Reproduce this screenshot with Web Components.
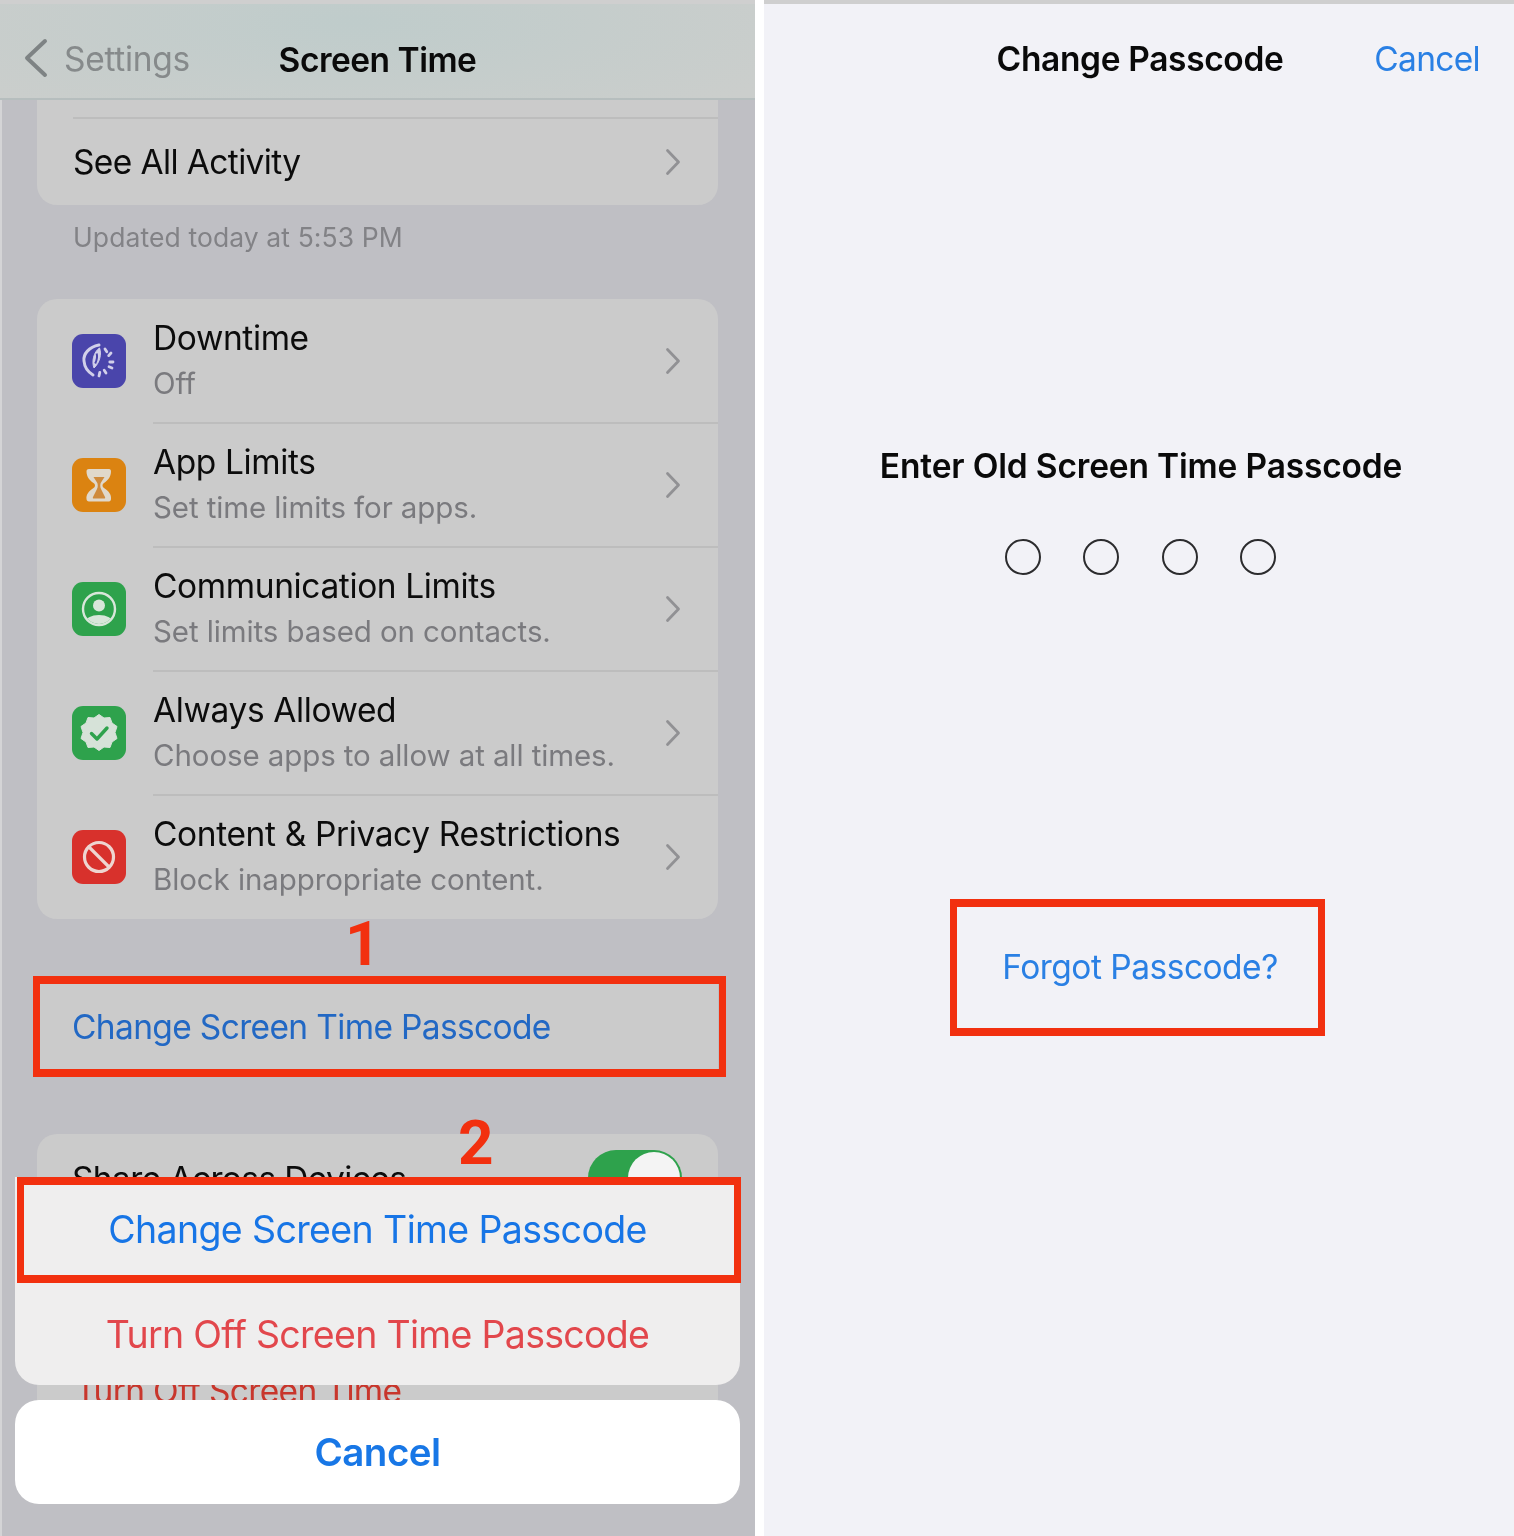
<!DOCTYPE html>
<html lang="en">
<head>
<meta charset="utf-8">
<title>Change Screen Time Passcode</title>
<style>
  html, body { margin: 0; background: #cfcfcf; }
  body { font-family: Inter, "Liberation Sans", sans-serif; }
  guide-page { filter: blur(0.75px); }
</style>
</head>
<body>
<guide-page>
  <screen-time slot="left"></screen-time>
  <change-passcode slot="right"></change-passcode>
</guide-page>

<script>
const RED = '#f2300f';

class GuidePage extends HTMLElement {
    constructor() {
        super();
        this.attachShadow({ mode: 'open' }).innerHTML = `
<style>
  :host { display: grid; grid-template-columns: 755px 750px; column-gap: 9px; width: 1514px; height: 1536px; overflow: hidden; background: #fff; }
</style>
<slot name="left"></slot>
<slot name="right"></slot>`;
    }
}

// red marker frame laid over whatever it is dropped in
class MarkBox extends HTMLElement {
    constructor() {
        super();
        this.attachShadow({ mode: 'open' }).innerHTML = `
<style>
  :host { display: block; position: absolute; box-sizing: border-box; border: 8px solid ${RED}; border-left-width: 7px; border-right-width: 7px; pointer-events: none; z-index: 5; }
</style>`;
    }
}

class StepNumber extends HTMLElement {
    constructor() {
        super();
        this.attachShadow({ mode: 'open' }).innerHTML = `
<style>
  :host { display: block; position: absolute; font: 700 62px/62px Roboto, "Liberation Sans", sans-serif; color: ${RED}; z-index: 5; }
</style>
<slot></slot>`;
    }
}

class StCard extends HTMLElement {
    constructor() {
        super();
        this.attachShadow({ mode: 'open' }).innerHTML = `
<style>
  :host { display: block; position: relative; margin: 0 37px; background: #cbcbcb; border-radius: 20px; }
</style>
<slot></slot>`;
    }
}

const ICONS = {
    downtime: { bg: '#4a45ab', svg: `
      <path d="M27 11C17 13 11 20 12 27C12.500 33 16 38 21 41" fill="none" stroke="#d2d0ea" stroke-width="3" stroke-linecap="round"/>
      <path d="M27.500 14c2.500 6 0 15 -5.500 20c-2.500 -6 -.5 -16 5.500 -20z" fill="#d2d0ea" stroke="#d2d0ea" stroke-width="1" stroke-linejoin="round"/>
      <path d="M24.700 19.500c1 4 0 7 -1.500 10" fill="none" stroke="#4a45ab" stroke-width="2"/>
      <g stroke="#d2d0ea" stroke-width="2.800" stroke-linecap="round">
        <path d="M33 15l1.800 2.800M39 19l-2.300 2.600M41 28h-3.200M40 34l-3 -1.200M34 39l-1.800 -2.800M27 42l.8 -3.600"/>
      </g>` },
    hourglass: { bg: '#db8311', svg: `
      <path d="M17 11h20c1.500 0 2 1 2 2.500c0 5 -3 9 -7 11.500c-2 1.200 -2 3.800 0 5c5 3 7.500 7 7 11c0 1.500 -1 2.500 -2 2.500h-20c-1.500 0 -2.500 -1 -2.500 -2.500c-.5 -4 2 -8 7 -11c2 -1.200 2 -3.800 0 -5c-4 -2.500 -7 -6.500 -7 -11.500c0 -1.500 .5 -2.500 2.500 -2.500z" fill="#e0d8cb"/>
      <path d="M21.500 19h11l-3.500 5.500c-1 1.200 -1 5 0 6.500l4 8c.5 1 0 1.500 -1 1.500h-10c-1 0 -1.500 -.5 -1 -1.500l4 -8c1 -1.500 1 -5.300 0 -6.500z" fill="#cf8a3c"/>` },
    person: { bg: '#2ea24c', svg: `
      <clipPath id="p"><circle cx="27" cy="27" r="15"/></clipPath>
      <circle cx="27" cy="23.500" r="6" fill="#d8e6da"/>
      <ellipse cx="27" cy="41" rx="14" ry="8" fill="#d8e6da" clip-path="url(#p)"/>
      <circle cx="27" cy="27" r="16" fill="none" stroke="#d8e6da" stroke-width="2.400"/>` },
    allowed: { bg: '#2ea24c', svg: `
      <path d="M27 8.500l5 3.500l6 -.5l2 5.500l5 3.500l-2 6l2 6l-5 3.500l-2 5.500l-6 -.5l-5 3.500l-5 -3.500l-6 .5l-2 -5.500l-5 -3.500l2 -6l-2 -6l5 -3.500l2 -5.500l6 .5z" fill="#d6e2d8" stroke="#d6e2d8" stroke-width="1" stroke-linejoin="round"/>
      <path d="M19.500 27.500l5.500 5.500l10 -11" fill="none" stroke="#2ea24c" stroke-width="3.400" stroke-linecap="round" stroke-linejoin="round"/>` },
    block: { bg: '#d8312c', svg: `
      <circle cx="27" cy="27" r="14.500" fill="none" stroke="#eed5d0" stroke-width="3.200"/>
      <path d="M17 17l20 20" stroke="#eed5d0" stroke-width="3.200"/>` }
};

class AppIcon extends HTMLElement {
    constructor() {
        super();
        const icon = ICONS[this.getAttribute('kind')];
        this.attachShadow({ mode: 'open' }).innerHTML = `
<style>
  :host { display: block; width: 54px; height: 54px; border-radius: 11px; background: ${icon.bg}; }
  svg { display: block; }
</style>
<svg width="54" height="54" viewBox="0 0 54 54">${icon.svg}</svg>`;
    }
}

class StChevron extends HTMLElement {
    constructor() {
        super();
        this.attachShadow({ mode: 'open' }).innerHTML = `
<style>
  :host { display: block; width: 16px; height: 28px; }
  svg { display: block; }
</style>
<svg width="16" height="28" viewBox="0 0 16 28"><path d="M2.500 2.500L13.500 14L2.500 25.500" fill="none" stroke="#919194" stroke-width="2.800" stroke-linecap="round" stroke-linejoin="round"/></svg>`;
    }
}

class StRow extends HTMLElement {
    constructor() {
        super();
        this.attachShadow({ mode: 'open' }).innerHTML = `
<style>
  :host { display: grid; grid-template-columns: 54px 1fr 16px; column-gap: 27px; align-items: center; height: 124px; padding: 0 37px 0 35px; box-sizing: border-box; position: relative; }
  :host(:not(:last-child))::after { content: ""; position: absolute; left: 116px; right: 0; bottom: -1px; height: 2px; background: #bdbdbd; }
  .text { display: flex; flex-direction: column; margin-top: -1px; }
  .title { font-size: 33.500px; line-height: 46px; letter-spacing: -0.38px; color: #0c0c0c; white-space: nowrap; }
  .sub { font-size: 29.500px; line-height: 45px; letter-spacing: -0.1px; color: #7a7a7e; white-space: nowrap; }
</style>
<slot name="icon"></slot>
<div class="text">
  <div class="title"><slot name="title"></slot></div>
  <div class="sub"><slot name="sub"></slot></div>
</div>
<st-chevron></st-chevron>`;
    }
}

class ScreenTime extends HTMLElement {
    constructor() {
        super();
        this.attachShadow({ mode: 'open' }).innerHTML = `
<style>
  :host { display: block; position: relative; height: 1536px; overflow: hidden; background: #bfbfc4; box-shadow: inset 2px 0 0 #d4d4d6; }
  .strip { height: 4px; background: #cfcfcf; }
  nav {
    height: 96px; box-sizing: border-box; position: relative; display: flex; align-items: center; justify-content: center; padding-top: 17px;
    background: radial-gradient(ellipse 480px 120px at 47% 20%, #bfcccb, #cbcecc 100%);
    border-bottom: 2px solid #b6bebe;
  }
  .back { position: absolute; left: 23px; top: 26px; display: flex; align-items: center; gap: 15px; color: #868a8b; font-size: 33.500px; letter-spacing: -0.3px; line-height: 58px; height: 58px; }
  .back svg { display: block; margin-top: -2px; }
  .head { font-size: 33.500px; font-weight: 600; letter-spacing: -0.5px; color: #0a0a0a; line-height: 46px; }
  .sliver { height: 17px; border-bottom: 2px solid #bdbdbd; margin-left: 36px; }
  .see-row { height: 86px; display: flex; align-items: center; justify-content: space-between; padding: 0 37px 0 36px; }
  .line { font-size: 33.500px; letter-spacing: -0.62px; color: #0c0c0c; }
  .note { font-size: 26.500px; line-height: 36px; letter-spacing: 0.1px; color: #828286; margin: 14px 0 44px 73px; }
  .pass { height: 96px; margin-top: 60px; display: flex; align-items: center; padding-left: 35px; color: #2268c4; font-size: 33.500px; letter-spacing: -0.65px; }
  .share { margin-top: 59px; height: 306px; }
  .share-row { height: 88px; display: flex; align-items: center; justify-content: space-between; padding: 0 36px 0 35px; }
  .share-row .line { margin-top: 2px; }
  .toggle { width: 94px; height: 56px; border-radius: 28px; background: #2ea24c; position: relative; }
  .toggle::after { content: ""; position: absolute; right: 2px; top: 2px; width: 52px; height: 52px; border-radius: 50%; background: #f4f4f4; }
  .off { position: absolute; left: 38px; top: 234px; line-height: 46px; font-size: 33.500px; letter-spacing: -0.65px; color: #c8362c; }
  .one { left: 345px; top: 913px; }
  .two { left: 458px; top: 1112px; }
  .frame-a { left: -4px; right: -8px; top: -3px; bottom: -2px; }
  .sheet { position: absolute; left: 15px; width: 725px; top: 1177px; z-index: 3; }
  .group { background: #efeeee; border-radius: 0 0 24px 24px; }
  .act { display: flex; align-items: center; justify-content: center; font-size: 37.500px; position: relative; }
  .blue { height: 105px; color: #1775e6; letter-spacing: -0.62px; }
  .red { height: 103px; color: #e2474c; letter-spacing: -0.7px; padding-top: 2px; box-sizing: border-box; }
  .cancel { height: 104px; margin-top: 15px; background: #fff; border-radius: 24px; color: #1877e6; font-size: 38.500px; letter-spacing: -0.55px; font-weight: 600; }
  .frame-b { left: 2px; right: -1px; top: 0; bottom: -1px; }
</style>
<div class="strip"></div>
<nav>
  <div class="back">
    <svg width="26" height="40" viewBox="0 0 26 40"><path d="M22 3L4 20L22 37" fill="none" stroke="#7e8384" stroke-width="4" stroke-linecap="round" stroke-linejoin="round"/></svg>
    <span>Settings</span>
  </div>
  <div class="head">Screen Time</div>
</nav>
<st-card style="border-radius: 0 0 20px 20px">
  <div class="sliver"></div>
  <div class="see-row"><span class="line">See All Activity</span><st-chevron></st-chevron></div>
</st-card>
<div class="note">Updated today at 5:53 PM</div>
<st-card>
  <st-row><app-icon slot="icon" kind="downtime"></app-icon><span slot="title">Downtime</span><span slot="sub">Off</span></st-row>
  <st-row><app-icon slot="icon" kind="hourglass"></app-icon><span slot="title">App Limits</span><span slot="sub">Set time limits for apps.</span></st-row>
  <st-row><app-icon slot="icon" kind="person"></app-icon><span slot="title">Communication Limits</span><span slot="sub">Set limits based on contacts.</span></st-row>
  <st-row><app-icon slot="icon" kind="allowed"></app-icon><span slot="title">Always Allowed</span><span slot="sub">Choose apps to allow at all times.</span></st-row>
  <st-row><app-icon slot="icon" kind="block"></app-icon><span slot="title">Content &amp; Privacy Restrictions</span><span slot="sub">Block inappropriate content.</span></st-row>
</st-card>
<st-card class="pass" style="border-radius: 0">
  Change Screen Time Passcode
  <mark-box class="frame-a"></mark-box>
</st-card>
<st-card class="share">
  <div class="share-row"><span class="line">Share Across Devices</span><div class="toggle"></div></div>
  <div class="off">Turn Off Screen Time</div>
</st-card>
<step-number class="one">1</step-number>
<step-number class="two">2</step-number>
<div class="sheet">
  <div class="group">
    <div class="act blue">Change Screen Time Passcode<mark-box class="frame-b"></mark-box></div>
    <div class="act red">Turn Off Screen Time Passcode</div>
  </div>
  <div class="act cancel">Cancel</div>
</div>`;
    }
}

class ChangePasscode extends HTMLElement {
    constructor() {
        super();
        this.attachShadow({ mode: 'open' }).innerHTML = `
<style>
  :host { display: flex; flex-direction: column; align-items: center; height: 1536px; background: #f2f2f7; box-sizing: border-box; border-top: 4px solid #cfcfcf; color: #0a0a0a; }
  nav { align-self: stretch; height: 110px; position: relative; display: flex; justify-content: center; align-items: center; font-size: 33.500px; font-weight: 600; letter-spacing: -0.35px; }
  .cancel { position: absolute; right: 34px; top: 26px; line-height: 58px; font-weight: 400; letter-spacing: -0.7px; color: #2a80e4; }
  .title { height: 110px; line-height: 110px; margin-left: 2px; }
  .prompt { margin-top: 324px; margin-left: 4px; font-size: 33.500px; line-height: 56px; font-weight: 600; letter-spacing: -0.17px; white-space: nowrap; }
  .dots { display: flex; gap: 42.300px; margin-top: 45px; margin-left: 3px; }
  .dots i { display: block; width: 36px; height: 36px; box-sizing: border-box; border: 2px solid #2c2c2e; border-radius: 50%; }
  .forgot { position: relative; margin-top: 369px; margin-left: 2px; font-size: 33.500px; line-height: 46px; letter-spacing: -0.5px; color: #2a80e4; }
  .frame { left: -52px; right: -47px; top: -45px; bottom: -46px; }
</style>
<nav><span class="title">Change Passcode</span><span class="cancel">Cancel</span></nav>
<div class="prompt">Enter Old Screen Time Passcode</div>
<div class="dots"><i></i><i></i><i></i><i></i></div>
<div class="forgot">Forgot Passcode?<mark-box class="frame"></mark-box></div>`;
    }
}

customElements.define('guide-page', GuidePage);
customElements.define('mark-box', MarkBox);
customElements.define('step-number', StepNumber);
customElements.define('st-card', StCard);
customElements.define('app-icon', AppIcon);
customElements.define('st-chevron', StChevron);
customElements.define('st-row', StRow);
customElements.define('screen-time', ScreenTime);
customElements.define('change-passcode', ChangePasscode);
</script>
</body>
</html>
